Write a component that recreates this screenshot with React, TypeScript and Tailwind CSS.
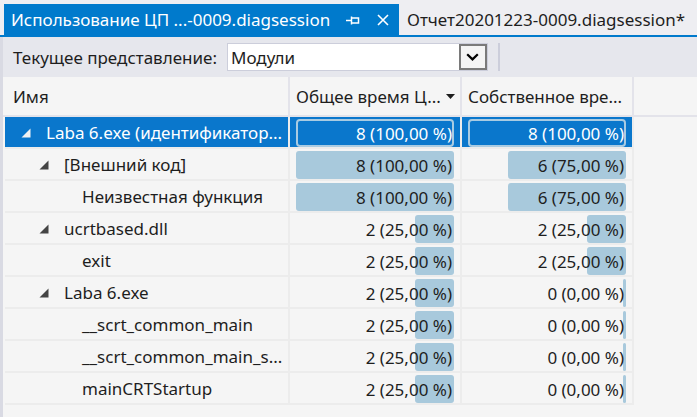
import React from 'react';

interface Row {
  level: number;
  name: string;
  expander?: boolean;
  total: number;
  totalPct: number;
  self: number;
  selfPct: number;
  selected?: boolean;
}

const ROWS: Row[] = [
  { level: 0, name: 'Laba 6.exe (идентификатор...', expander: true, total: 8, totalPct: 100, self: 8, selfPct: 100, selected: true },
  { level: 1, name: '[Внешний код]', expander: true, total: 8, totalPct: 100, self: 6, selfPct: 75 },
  { level: 2, name: 'Неизвестная функция', total: 8, totalPct: 100, self: 6, selfPct: 75 },
  { level: 1, name: 'ucrtbased.dll', expander: true, total: 2, totalPct: 25, self: 2, selfPct: 25 },
  { level: 2, name: 'exit', total: 2, totalPct: 25, self: 2, selfPct: 25 },
  { level: 1, name: 'Laba 6.exe', expander: true, total: 2, totalPct: 25, self: 0, selfPct: 0 },
  { level: 2, name: '__scrt_common_main', total: 2, totalPct: 25, self: 0, selfPct: 0 },
  { level: 2, name: '__scrt_common_main_s...', total: 2, totalPct: 25, self: 0, selfPct: 0 },
  { level: 2, name: 'mainCRTStartup', total: 2, totalPct: 25, self: 0, selfPct: 0 },
];

const fmtPct = (n: number, pct: number) => `${n} (${pct.toFixed(2).replace('.', ',')} %)`;

const INDENT = [16, 34, 52];

function Expander({ selected }: { selected?: boolean }) {
  return (
    <svg width="10" height="10" viewBox="0 0 10 10" className="shrink-0">
      <path d="M9.5 0.5 L9.5 9.5 L0.5 9.5 Z" fill={selected ? '#f2f2f2' : '#444444'} />
    </svg>
  );
}

function BarCell({ value, pct, selected }: { value: number; pct: number; selected?: boolean }) {
  return (
    <div className={`px-[6px] py-[2px] ${selected ? 'bg-[#0a77cc]' : 'bg-[#f5f5f5]'}`}>
      <div className="grid h-[26px]">
        <div className="col-start-1 row-start-1 flex justify-end">
          {selected ? (
            <div className="w-full h-full rounded-[4px] border-2 border-[#a9cbe2]" />
          ) : (
            <div
              className="h-full rounded-[3px] bg-[#a8c9dc]"
              style={{ width: pct === 0 ? '3px' : `${pct}%` }}
            />
          )}
        </div>
        <div
          className={`col-start-1 row-start-1 flex items-center justify-end pr-[2px] pt-[2px] text-[17px] ${
            selected ? 'text-white' : 'text-[#1e1e1e]'
          }`}
        >
          {fmtPct(value, pct)}
        </div>
      </div>
    </div>
  );
}

export default function App() {
  return (
    <div
      className="w-[697px] h-[417px] overflow-hidden bg-[#eeeef2] flex flex-col"
      style={{ fontFamily: '"Noto Sans", "Open Sans", sans-serif' }}
    >
      {/* Tabs */}
      <div className="h-[37px] shrink-0 pt-[4px] pl-[4px] flex border-b-2 border-[#007acc]">
        <div className="w-[395px] h-full bg-[#007acc] flex items-center pl-[7px] pt-[1px] text-white text-[17px]">
          <span className="whitespace-nowrap">Использование ЦП ...-0009.diagsession</span>
          <div className="ml-auto flex items-center">
            <svg width="14" height="9" viewBox="0 0 14 9" className="mr-[17px]">
              <path d="M0 4.5 H5" stroke="#ffffff" strokeWidth="1.5" />
              <path d="M5.5 0.5 V8.5" stroke="#ffffff" strokeWidth="1.5" />
              <path d="M6 2 H12.5 V7 H6" stroke="#ffffff" strokeWidth="1.5" fill="none" />
            </svg>
            <svg width="12" height="12" viewBox="0 0 12 12" className="mr-[10px]">
              <path d="M1 1 L11 11 M11 1 L1 11" stroke="#ffffff" strokeWidth="1.6" />
            </svg>
          </div>
        </div>
        <div className="flex items-center pl-[8px] pt-[1px] text-[17px] text-[#1e1e1e] whitespace-nowrap">
          Отчет20201223-0009.diagsession*
        </div>
      </div>

      {/* Body */}
      <div className="flex-1 flex flex-col border-l-[3px] border-[#d9dae3]">
        {/* Toolbar */}
        <div className="h-[40px] shrink-0 bg-[#e6e7ed] flex items-center pl-[10px]">
          <span className="pt-[1px] text-[17px] text-[#1e1e1e] whitespace-nowrap">Текущее представление:</span>
          <div className="ml-[10px] w-[261px] h-[28px] bg-white border border-[#cccedb] flex items-center">
            <span className="pl-[3px] pt-[1px] text-[17px] text-[#1e1e1e]">Модули</span>
            <div className="ml-auto h-full w-[28px] border-2 border-[#7a7a7a] bg-[#f4f4f4] flex items-center justify-center">
              <svg width="13" height="8" viewBox="0 0 13 8">
                <path d="M1.2 1.2 L6.5 6.4 L11.8 1.2" stroke="#000000" strokeWidth="2.2" fill="none" />
              </svg>
            </div>
          </div>
          <div className="ml-[10px] w-[2px] h-[28px] bg-[#cccedb]" />
        </div>

        {/* Table */}
        <div className="flex-1 bg-[#f5f5f5] flex flex-col">
          {/* Header */}
          <div className="h-[40px] shrink-0 flex border-b-2 border-[#e3e3ea] text-[17px] text-[#1e1e1e]">
            <div className="w-[287px] flex items-center pl-[10px] pt-[1px] border-r-2 border-[#e3e3ea]">Имя</div>
            <div className="w-[172px] flex items-center pl-[6px] pr-[5px] pt-[1px] border-r-2 border-[#e3e3ea] whitespace-nowrap">
              <span>Общее время Ц...</span>
              <svg width="9" height="5" viewBox="0 0 9 5" className="ml-auto">
                <path d="M0 0 H9 L4.5 5 Z" fill="#1e1e1e" />
              </svg>
            </div>
            <div className="w-[172px] flex items-center pl-[6px] pt-[1px] border-r-2 border-[#e3e3ea] whitespace-nowrap">
              Собственное вре...
            </div>
          </div>

          {/* Rows */}
          <div className="flex flex-col">
            {ROWS.map((r, i) => (
              <div key={i} className="ml-[2px] w-[629px] h-[32px] flex gap-[2px] pr-[2px] pb-[2px] bg-[#ececec]">
                <div
                  className={`w-[283px] flex items-center pt-[2px] text-[17px] whitespace-nowrap ${
                    r.selected ? 'bg-[#0a77cc] text-white' : 'bg-[#f5f5f5] text-[#1e1e1e]'
                  }`}
                  style={{ paddingLeft: INDENT[r.level] }}
                >
                  <div className="w-[25px] shrink-0">{r.expander && <Expander selected={r.selected} />}</div>
                  <span>{r.name}</span>
                </div>
                <div className="w-[170px]">
                  <BarCell value={r.total} pct={r.totalPct} selected={r.selected} />
                </div>
                <div className="w-[170px]">
                  <BarCell value={r.self} pct={r.selfPct} selected={r.selected} />
                </div>
              </div>
            ))}
          </div>
        </div>
      </div>
    </div>
  );
}
